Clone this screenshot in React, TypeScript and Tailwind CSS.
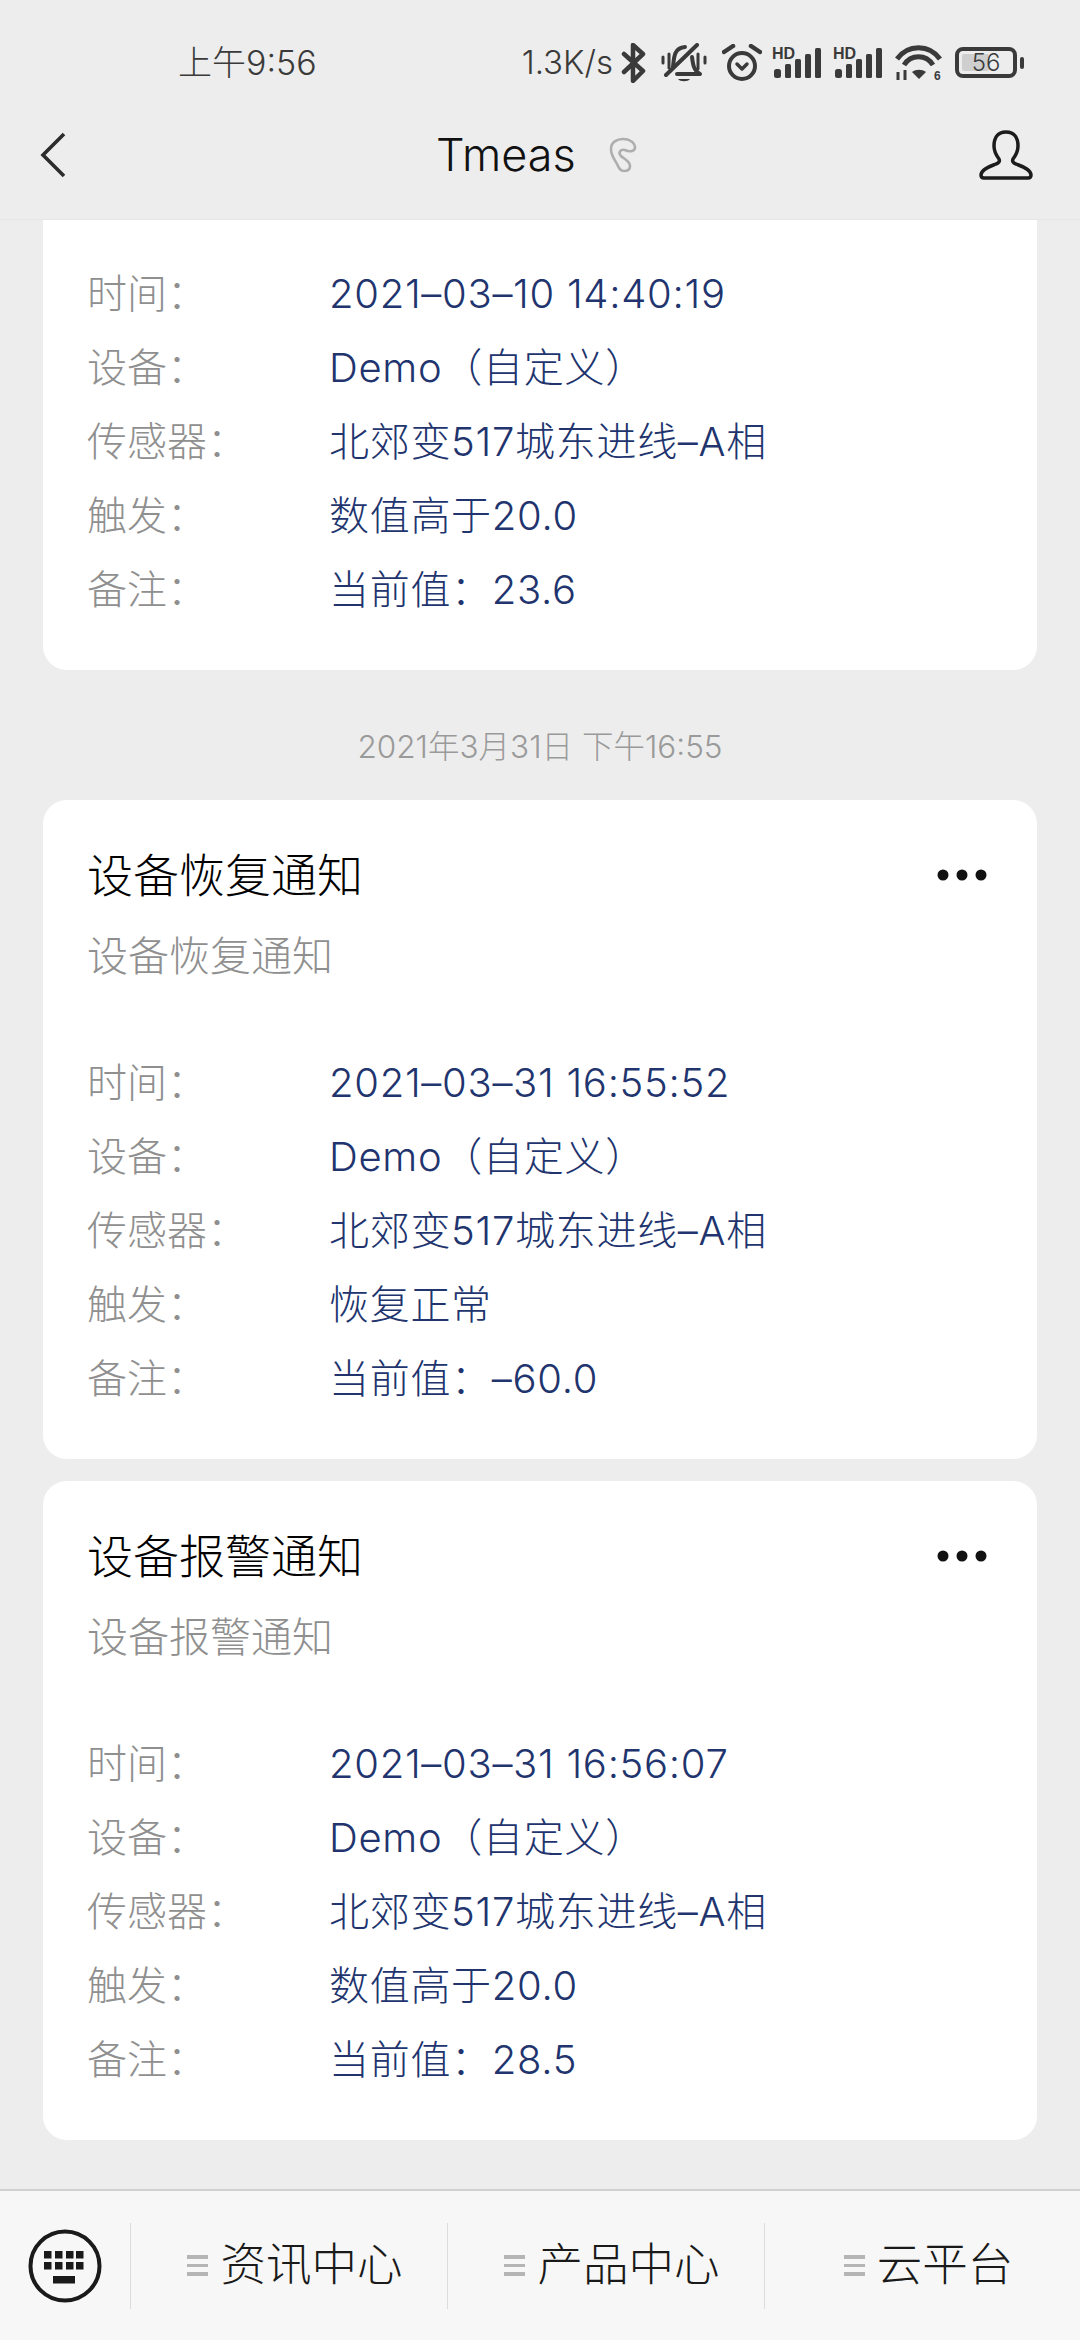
import React from "react";

const FONT = '"Inter","Noto Sans CJK SC",sans-serif';

function Row({ label, value }: { label: string; value: string }) {
  return (
    <div className="flex h-[74px] items-center text-[40px] font-light">
      <div className="w-[242px] text-[#8f8f8f]">{label}</div>
      <div className="tracking-[0.7px] text-[#21346e]">{value}</div>
    </div>
  );
}

function Rows({ rows }: { rows: [string, string][] }) {
  return (
    <div>
      {rows.map(([l, v]) => (
        <Row key={l} label={l} value={v} />
      ))}
    </div>
  );
}

function Card({ title, rows }: { title: string; rows: [string, string][] }) {
  return (
    <div className="rounded-[24px] bg-white pb-[43px] pl-[44px] pr-[45px] pt-[40px]">
      <div className="flex h-[70px] items-center justify-between">
        <div className="text-[46px] font-light text-black">{title}</div>
        <svg width="50" height="14" viewBox="0 0 50 14" className="mr-[5px]">
          <circle cx="6" cy="7" r="5.5" fill="#111" />
          <circle cx="25" cy="7" r="5.5" fill="#111" />
          <circle cx="44" cy="7" r="5.5" fill="#111" />
        </svg>
      </div>
      <div className="mt-[11px] h-[70px] text-[41px] font-light leading-[70px] text-[#8f8f8f]">{title}</div>
      <div className="mt-[55px]">
        <Rows rows={rows} />
      </div>
    </div>
  );
}

function Signal() {
  return (
    <svg width="50" height="38" viewBox="0 -3 50 38" fill="#3a3a3a">
      <text x="0" y="12" fontSize="16" fontWeight="700" fontFamily="Liberation Sans">HD</text>
      <rect x="2" y="22" width="7" height="9" rx="2.5" />
      <rect x="13" y="17" width="6" height="14" rx="1.5" />
      <rect x="23" y="12" width="6" height="19" rx="1.5" />
      <rect x="33" y="7" width="6" height="24" rx="1.5" />
      <rect x="43" y="1" width="6" height="30" rx="1.5" />
    </svg>
  );
}

function StatusBar() {
  return (
    <div className="flex h-[124px] items-center pl-[178px] pr-[56px] pt-[1px] text-[#3a3a3a]">
      <div className="text-[34px] font-light">上午9:56</div>
      <div className="ml-auto flex items-center">
        <div className="text-[33px] font-light">1.3K/s</div>
        <svg width="26" height="40" viewBox="0 0 26 40" fill="none" stroke="#3a3a3a" strokeWidth="4.5" className="ml-[8px]">
          <path d="M3 11 L22 28 L12 38 V2 L22 11 L3 29" strokeLinejoin="round" strokeLinecap="round" />
        </svg>
        <svg width="46" height="40" viewBox="0 0 46 40" fill="none" stroke="#3a3a3a" strokeWidth="4" className="ml-[14px]">
          <path d="M12 24 C13 14 13 5 24 4 M31 14 C32 22 33 28 39 31 H16" strokeLinejoin="round" strokeLinecap="round" />
          <path d="M5 32 L36 2" strokeLinecap="round" />
          <path d="M17 36 H29 C27 39 19 39 17 36 Z" fill="#3a3a3a" stroke="none" />
          <path d="M2 14 V20 M8 11 V25 M37 11 V26 M44 14 V20" strokeWidth="3" strokeLinecap="round" />
        </svg>
        <svg width="40" height="38" viewBox="0 0 40 38" fill="none" stroke="#3a3a3a" className="ml-[15px]">
          <circle cx="20" cy="22" r="13" strokeWidth="4" />
          <path d="M15 20 L20 25 L25 20" strokeWidth="3.5" strokeLinecap="round" strokeLinejoin="round" />
          <path d="M2 8 L11 2 M29 2 L38 8" strokeWidth="4.5" strokeLinecap="round" />
        </svg>
        <div className="ml-[10px]"><Signal /></div>
        <div className="ml-[11px]"><Signal /></div>
        <svg width="47" height="40" viewBox="0 -2 47 40" fill="none" stroke="#3a3a3a" strokeWidth="5" className="ml-[12px]">
          <path d="M2 14 C13 -1 34 -1 45 14" />
          <path d="M9 20 C16 9 31 9 38 20" />
          <path d="M17 27 C21 24 27 24 31 27 L24 34 Z" fill="#3a3a3a" stroke="none" />
          <path d="M3 27 V35 M10 25 V35" strokeWidth="3" />
          <text x="39" y="35" fontSize="12" fontWeight="700" fontFamily="Liberation Sans" fill="#3a3a3a" stroke="none">6</text>
        </svg>
        <div className="relative ml-[13px] flex h-[31px] w-[62px] items-center justify-center rounded-[8px] border-[4px] border-[#3a3a3a] text-[24px] font-light">
          <div className="absolute left-[3px] top-[3px] h-[17px] w-[27px] rounded-[2px] bg-[#cfcfcf]" />
          <span className="relative">56</span>
        </div>
        <div className="ml-[3px] h-[12px] w-[4px] rounded-full bg-[#3a3a3a]" />
      </div>
    </div>
  );
}

function Header() {
  return (
    <div className="relative flex h-[96px] items-center justify-between border-b border-[#e6e6e6] pb-[34px] pl-[40px] pr-[47px]">
      <svg width="26" height="46" viewBox="0 0 26 46" fill="none" stroke="#2c2c2c" strokeWidth="3.6">
        <path d="M24 2 L3 23 L24 44" />
      </svg>
      <div className="absolute left-[436px] top-[0px] flex h-[62px] items-center">
        <span className="text-[45px] font-light text-[#111]">Tmeas</span>
        <svg width="28" height="36" viewBox="0 0 28 36" fill="none" stroke="#aeaeae" strokeWidth="2.6" className="ml-[33px]">
          <path d="M26 11 C25 15 20 15 16 13 C11 12 9 16 12 19 C15 22 21 24 21 29 C21 33 18 34 15 34 C11 34 10 31 8 27 C6 23 2 19 2 12 C2 5 8 2 14 2 C20 2 26 5 26 11 Z" />
        </svg>
      </div>
      <svg width="54" height="50" viewBox="0 0 54 50" fill="none" stroke="#1c1c1c" strokeWidth="3.5" strokeLinejoin="round">
        <path d="M27 2 C18 2 15 9 15 16 C15 22 17 25 20 29 C21 31 20 33 17 34 C12 36 2 39 2 45 C2 47 3 48 5 48 H49 C51 48 52 47 52 45 C52 39 42 36 37 34 C34 33 33 31 34 29 C37 25 39 22 39 16 C39 9 36 2 27 2 Z" />
      </svg>
    </div>
  );
}

function Tab({ label, w }: { label: string; w: string }) {
  return (
    <div className={`flex h-[86px] items-center justify-center border-l border-[#dcdcdc] pl-[12px] ${w}`}>
      <div className="flex flex-col gap-[5px]">
        <div className="h-[3.5px] w-[21px] bg-[#b5b5b5]" />
        <div className="h-[3.5px] w-[21px] bg-[#b5b5b5]" />
        <div className="h-[3.5px] w-[21px] bg-[#b5b5b5]" />
      </div>
      <div className="ml-[12px] text-[45.5px] font-light text-[#1a1a1a]">{label}</div>
    </div>
  );
}

export default function App() {
  const demo = "Demo（自定义）";
  const sensor = "北郊变517城东进线–A相";
  return (
    <div className="flex h-[2340px] w-[1080px] flex-col overflow-hidden bg-[#ededed]" style={{ fontFamily: FONT }}>
      <StatusBar />
      <Header />
      <div className="flex-1 overflow-hidden px-[43px]">
        <div className="rounded-b-[24px] bg-white pb-[43px] pl-[44px] pr-[45px] pt-[37px]">
          <Rows
            rows={[
              ["时间：", "2021–03–10 14:40:19"],
              ["设备：", demo],
              ["传感器：", sensor],
              ["触发：", "数值高于20.0"],
              ["备注：", "当前值：23.6"],
            ]}
          />
        </div>
        <div className="flex h-[130px] items-center justify-center pt-[24px] text-[31.5px] font-light text-[#9a9a9a]">2021年3月31日 下午16:55</div>
        <Card
          title="设备恢复通知"
          rows={[
            ["时间：", "2021–03–31 16:55:52"],
            ["设备：", demo],
            ["传感器：", sensor],
            ["触发：", "恢复正常"],
            ["备注：", "当前值：–60.0"],
          ]}
        />
        <div className="h-[22px]" />
        <Card
          title="设备报警通知"
          rows={[
            ["时间：", "2021–03–31 16:56:07"],
            ["设备：", demo],
            ["传感器：", sensor],
            ["触发：", "数值高于20.0"],
            ["备注：", "当前值：28.5"],
          ]}
        />
      </div>
      <div className="flex h-[151px] items-center border-t-2 border-[#d0d0d0] bg-[#f7f7f7]">
        <div className="flex w-[130px] items-center justify-center">
          <svg width="74" height="74" viewBox="0 0 74 74" fill="#1a1a1a">
            <circle cx="37" cy="37" r="34.5" fill="none" stroke="#1a1a1a" strokeWidth="4" />
            {[16, 27, 38, 48].map((x) => (
              <g key={x}>
                <rect x={x} y="22" width="7.5" height="7.5" />
                <rect x={x} y="33" width="7.5" height="7.5" />
              </g>
            ))}
            <rect x="25" y="47" width="22" height="7.5" />
          </svg>
        </div>
        <Tab label="资讯中心" w="w-[317px]" />
        <Tab label="产品中心" w="w-[317px]" />
        <Tab label="云平台" w="w-[316px]" />
      </div>
    </div>
  );
}
